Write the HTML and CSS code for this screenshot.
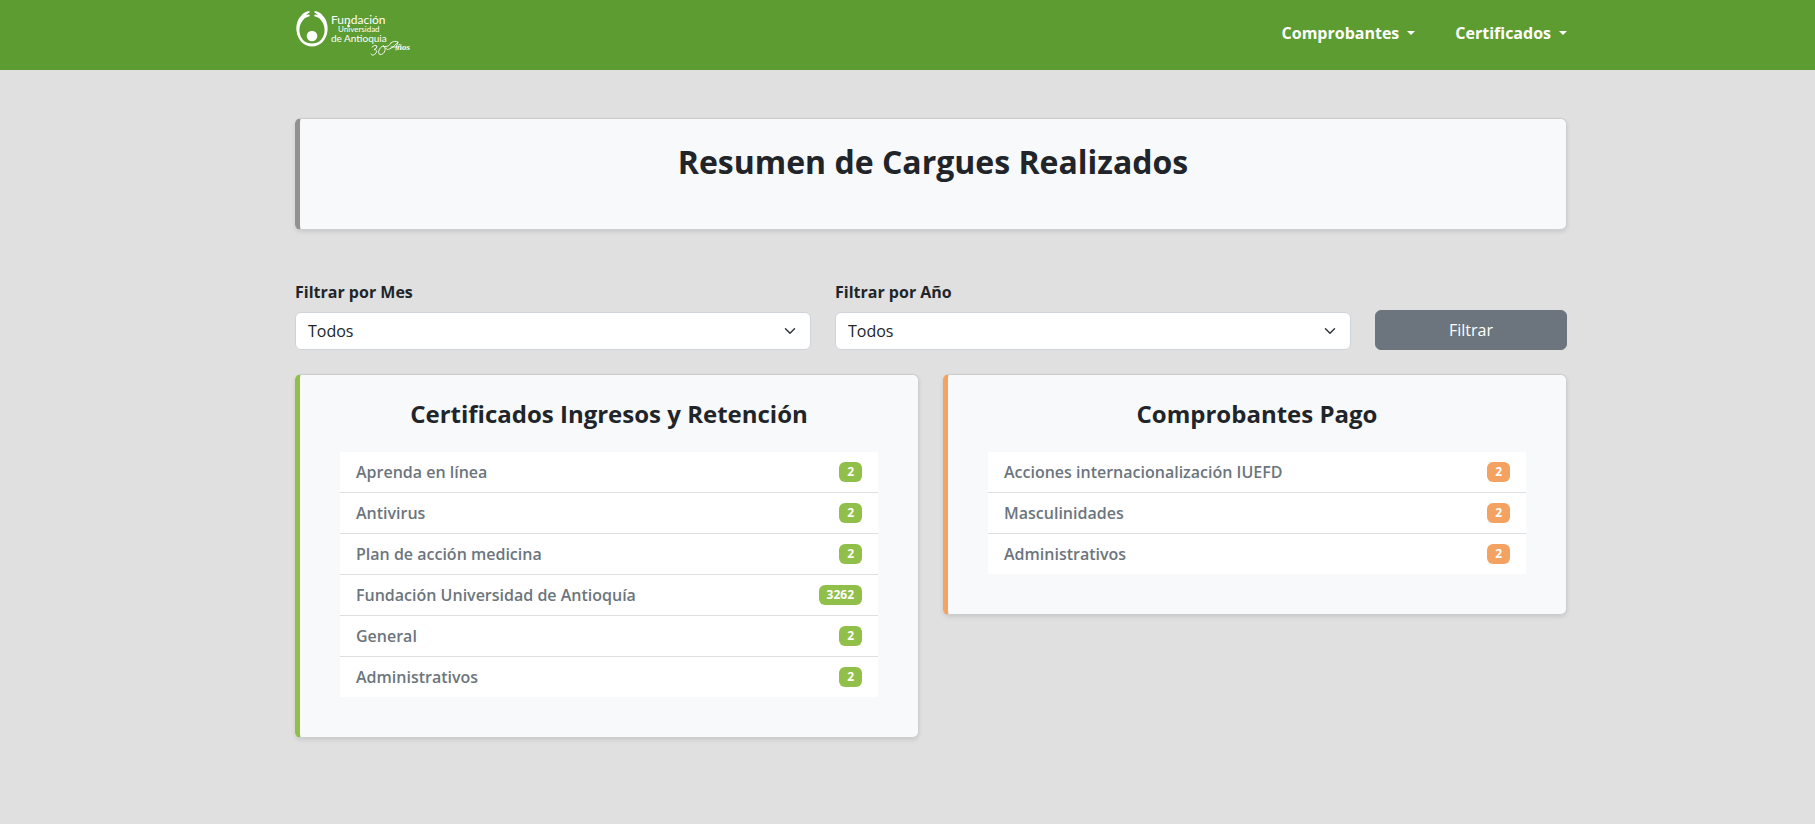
FILE: index.html
```html
<!DOCTYPE html>
<html lang="es">
<head>
<meta charset="utf-8">
<meta name="viewport" content="width=device-width, initial-scale=1">
<title>Resumen de Cargues Realizados</title>
<link rel="stylesheet" href="styles.css">
</head>
<body>
<header class="navbar">
  <div class="container navbar-inner">
    <a class="brand" href="#" aria-label="Fundación Universidad de Antioquia">
      <svg class="brand-logo" viewBox="0 0 120 48" aria-hidden="true">
        <g fill="#fff">
          <path d="M14 1C10 2 8 3 6 6C2 10 1 16 1.500 21C2.500 30 9 36.500 17 36.500C25 36.500 31.500 30 32.500 21C33 16 32 10 28 6C26 3 24 2 20 1L19 2L23 5L20 4.500L19 6L24 8C28 12 30 16 29.500 22C28.500 29 24 33.500 17 33.500C10 33.500 5.500 29 4.500 22C4 16 6 12 10 8L15 6L14 4.500L11 5L15 2Z"/>
          <circle cx="17" cy="26" r="5.300"/>
          <circle cx="53.500" cy="16" r="1.300"/>
        </g>
        <g fill="none" stroke="#fff" stroke-linecap="round" stroke-linejoin="round">
          <path d="M53.500 13V17" stroke-width="0.800"/>
          <path d="M77 37Q80 34 82 36Q82 39 79 39.500Q83 40 81 43Q78 47 76 44M88 36C84 37 82 44 85 44.500C90 45 92 37 88 36C92 38 96 34 96 33" stroke-width="0.900"/>
          <path d="M91 38C91 42 98 38 103 32C102 35 101 37 101 40M96 37H102M96 33C98 31 101 31 103 32" stroke-width="0.900"/>
        </g>
        <g class="logo-text">
          <text class="logo-large" x="36" y="14">Fundación</text>
          <text class="logo-small" x="43" y="22">Universidad</text>
          <text class="logo-medium" x="36" y="32">de Antioquia</text>
          <text class="logo-script" x="102" y="40">ños</text>
        </g>
      </svg>
    </a>
    <nav class="nav">
      <button class="nav-link" type="button" aria-haspopup="true">Comprobantes</button>
      <button class="nav-link" type="button" aria-haspopup="true">Certificados</button>
    </nav>
  </div>
</header>
<main class="container">
  <section class="card card-title">
    <h1>Resumen de Cargues Realizados</h1>
  </section>
  <form class="filters">
    <div class="field">
      <label for="mes">Filtrar por Mes</label>
      <select id="mes"><option>Todos</option></select>
    </div>
    <div class="field">
      <label for="anio">Filtrar por Año</label>
      <select id="anio"><option>Todos</option></select>
    </div>
    <button class="btn" type="button">Filtrar</button>
  </form>
  <div class="summary">
    <section class="card card-green">
      <h2>Certificados Ingresos y Retención</h2>
      <ul class="list">
        <li>Aprenda en línea <span class="badge">2</span></li>
        <li>Antivirus <span class="badge">2</span></li>
        <li>Plan de acción medicina <span class="badge">2</span></li>
        <li>Fundación Universidad de Antioquía <span class="badge">3262</span></li>
        <li>General <span class="badge">2</span></li>
        <li>Administrativos <span class="badge">2</span></li>
      </ul>
    </section>
    <section class="card card-orange">
      <h2>Comprobantes Pago</h2>
      <ul class="list">
        <li>Acciones internacionalización IUEFD <span class="badge">2</span></li>
        <li>Masculinidades <span class="badge">2</span></li>
        <li>Administrativos <span class="badge">2</span></li>
      </ul>
    </section>
  </div>
</main>
</body>
</html>
```
FILE: styles.css
```css
* { box-sizing: border-box; }

body {
  margin: 0;
  background: #e0e0e0;
  color: #212529;
  font: 400 16px/24px "Open Sans", "Liberation Sans", sans-serif;
}

.container {
  max-width: 1319px;
  margin: 0 auto;
  padding-left: 47px;
}

.navbar { background: #5d9c31; }

.navbar-inner {
  display: flex;
  align-items: flex-start;
  justify-content: space-between;
  padding-top: 10px;
  padding-bottom: 12px;
}

.brand { display: block; height: 48px; }
.brand-logo { display: block; width: 120px; height: 48px; overflow: visible; }
.logo-text { fill: #fff; font-family: Lato, sans-serif; }
.logo-large { font-size: 12px; }
.logo-small { font-size: 8px; }
.logo-medium { font-size: 10px; }
.logo-script { font: italic 700 9px "Liberation Serif", serif; }

.nav { display: flex; gap: 40px; padding-top: 11px; }

.nav-link {
  display: flex;
  align-items: center;
  gap: 8px;
  padding: 0;
  border: 0;
  background: none;
  color: #fff;
  font: inherit;
  font-weight: 700;
}

.nav-link::after {
  content: "";
  border: 4px solid transparent;
  border-top-color: #fff;
  border-bottom: 0;
}

.card {
  border: 1px solid #cbcdcf;
  border-left: 5px solid #929091;
  border-radius: 6px;
  background: #f8f9fb;
  box-shadow: 0 2px 4px rgba(0, 0, 0, 0.1);
}

.card-title { margin: 48px 0 50px; padding: 24px 24px 48px; }

h1, h2 { margin: 0; font-weight: 700; text-align: center; }
h1 { font-size: 32px; line-height: 38px; }
h2 { font-size: 24px; line-height: 29px; }

.filters {
  display: grid;
  grid-template-columns: 516fr 516fr 192fr;
  gap: 24px;
  align-items: end;
}

.field label { display: block; margin-bottom: 8px; font-weight: 700; }

.field select {
  display: block;
  width: 100%;
  height: 38px;
  padding: 6px 36px 6px 12px;
  border: 1px solid #ced4da;
  border-radius: 6px;
  appearance: none;
  background: #fff url("data:image/svg+xml,%3Csvg xmlns='http://www.w3.org/2000/svg' viewBox='0 0 16 16'%3E%3Cpath fill='none' stroke='%23343a40' stroke-linecap='round' stroke-linejoin='round' stroke-width='2' d='m2 5 6 6 6-6'/%3E%3C/svg%3E") no-repeat right 12px center / 16px 12px;
  color: #212529;
  font: inherit;
}

.btn {
  height: 40px;
  padding: 6px 12px;
  border: 1px solid #6c757d;
  border-radius: 6px;
  background: #6c757d;
  color: #fff;
  font: inherit;
}

.summary {
  display: grid;
  grid-template-columns: 1fr 1fr;
  gap: 24px;
  align-items: start;
  padding: 24px 0 48px;
}

.card-green { border-left-color: #90c04a; }
.card-orange { border-left-color: #f4a261; }
.summary .card { padding: 24px 40px 40px; }

.list {
  margin: 24px 0 0;
  padding: 0;
  background: #fff;
  list-style: none;
}

.list li {
  display: flex;
  align-items: center;
  justify-content: space-between;
  padding: 8px 16px;
  border-bottom: 1px solid #dedfe0;
  color: #6c757d;
  font-weight: 600;
}

.list li:last-child { border-bottom: 0; }

.badge {
  padding: 4px 8px;
  border-radius: 6px;
  background: #90c04a;
  color: #fff;
  font-size: 12px;
  line-height: 12px;
  font-weight: 700;
}

.card-orange .badge { background: #f4a261; }
```
